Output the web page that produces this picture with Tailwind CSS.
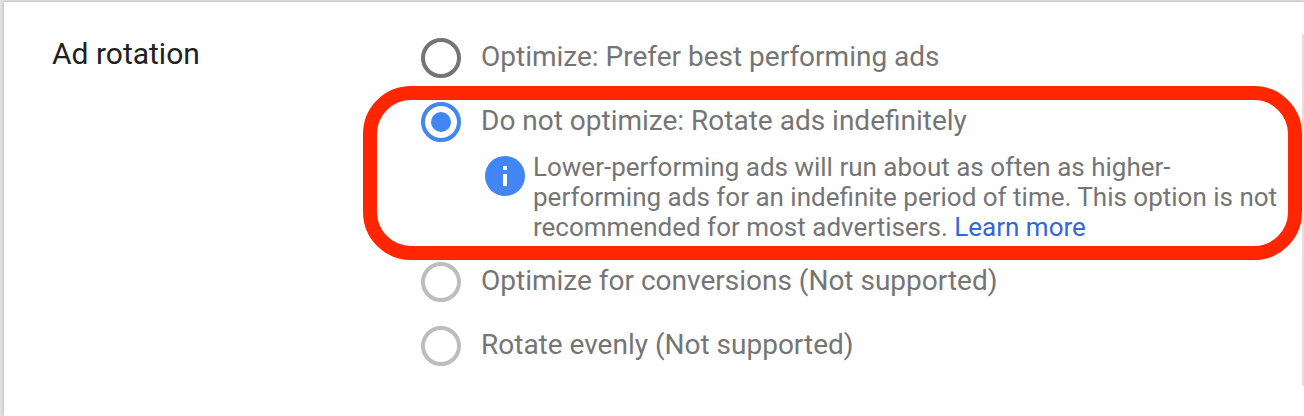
<!DOCTYPE html>
<html lang="en">
<head>
    <meta charset="UTF-8">
    <meta name="viewport" content="width=device-width, initial-scale=1.0">
    <title>Ad rotation</title>
    <script src="https://cdn.jsdelivr.net/npm/@tailwindcss/browser@4"></script>
</head>
<body class="bg-[#e4e4e4] pl-1 pt-0.5 font-[Roboto,sans-serif] text-[#757575]">
    <main class="min-h-[calc(100vh-2px)] bg-white shadow-[0_0_4px_rgba(0,0,0,0.25)] flow-root">
        <!-- Ad rotation setting -->
        <section class="mt-8 flex border-r-2 border-[#e0e0e0] pl-12 pt-1 pb-5">
            <h2 id="rotation-title" class="w-[369px] shrink-0 text-[30px] leading-8 text-[#212121]">Ad rotation</h2>

            <div role="radiogroup" aria-labelledby="rotation-title" class="flex-grow">
                <label class="flex items-start gap-5">
                    <input type="radio" name="rotation" class="appearance-none w-10 h-10 shrink-0 rounded-full border-4 border-[#757575]">
                    <span class="text-[28px] leading-[38px]">Optimize: Prefer best performing ads</span>
                </label>

                <!-- Selected option with its hint -->
                <div class="relative mt-6 mb-[18px]">
                    <div class="absolute -top-4 -bottom-4 -left-[58px] right-0 rounded-[48px] border-[14px] border-[#ff2600] pointer-events-none"></div>
                    <label class="flex items-start gap-5">
                        <input type="radio" name="rotation" checked class="appearance-none w-10 h-10 shrink-0 rounded-full border-4 border-[#4285f4] p-1.5 bg-clip-content checked:bg-[#4285f4]">
                        <span class="text-[28px] leading-[38px]">Do not optimize: Rotate ads indefinitely</span>
                    </label>
                    <div class="flex items-start gap-2 mt-2.5 pl-16 pr-4 pb-0.5">
                        <svg class="w-10 h-10 mt-1 shrink-0" viewBox="0 0 40 40">
                            <circle cx="20" cy="20" r="20" fill="#4285f4"/>
                            <path d="M18 10h4v4h-4zM18 18h4v12h-4z" fill="#fff"/>
                        </svg>
                        <p class="text-[26px] leading-[30px]">Lower-performing ads will run about as often as higher-performing ads for an indefinite period of time. This option is not recommended for most advertisers. <a href="#" class="text-[#3367d6]">Learn more</a></p>
                    </div>
                </div>

                <label class="flex items-start gap-5">
                    <input type="radio" name="rotation" disabled class="appearance-none w-10 h-10 shrink-0 rounded-full border-4 border-[#bdbdbd]">
                    <span class="text-[28px] leading-[38px]">Optimize for conversions (Not supported)</span>
                </label>
                <label class="flex items-start gap-5 mt-6">
                    <input type="radio" name="rotation" disabled class="appearance-none w-10 h-10 shrink-0 rounded-full border-4 border-[#bdbdbd]">
                    <span class="text-[28px] leading-[38px]">Rotate evenly (Not supported)</span>
                </label>
            </div>
        </section>
    </main>
</body>
</html>
